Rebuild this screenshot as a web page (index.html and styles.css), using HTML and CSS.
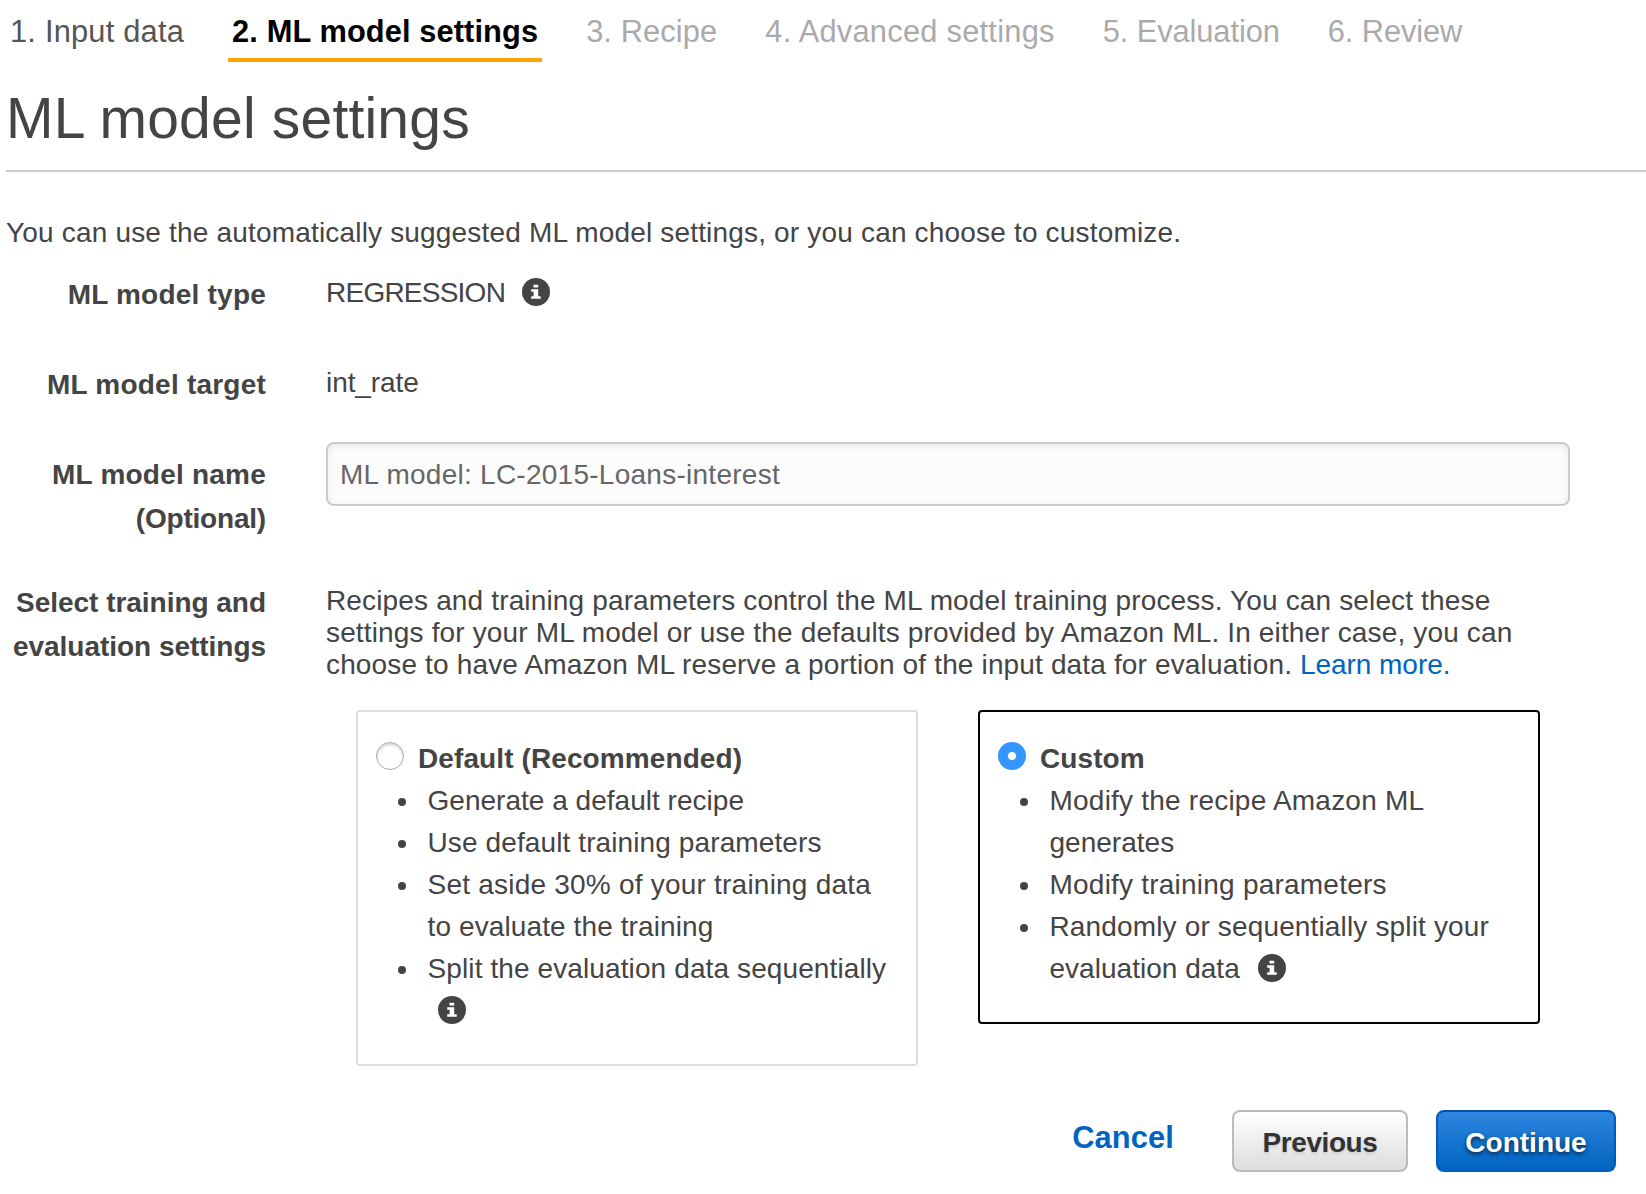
FILE: index.html
```
<!DOCTYPE html>
<html lang="en">
<head>
<meta charset="utf-8">
<title>ML model settings</title>
<link rel="stylesheet" href="styles.css">
</head>
<body>
<svg class="sprite" aria-hidden="true">
  <symbol id="info" viewBox="0 0 28 28">
    <circle cx="14" cy="14" r="14" fill="#444"/>
    <path fill="#fff" d="M11.5 6.7h4.7v2.8h-4.7zM9.2 11.3h7v7h2.5v2.5H9.2v-2.5h2.4v-4.6H9.2z"/>
  </symbol>
</svg>
<nav class="steps">
  <a class="step step-done">1. Input data</a>
  <a class="step step-current">2. ML model settings</a>
  <a class="step step-recipe">3. Recipe</a>
  <a class="step step-advanced">4. Advanced settings</a>
  <a class="step step-evaluation">5. Evaluation</a>
  <a class="step step-review">6. Review</a>
</nav>
<main class="page">
  <h1 class="title">ML model settings</h1>
  <p class="intro">You can use the automatically suggested ML model settings, or you can choose to customize.</p>

  <div class="row row-type">
    <div class="label">ML model type</div>
    <div class="value"><span class="caps">REGRESSION</span><svg class="info info-type"><use href="#info"/></svg></div>
  </div>
  <div class="row row-target">
    <div class="label">ML model target</div>
    <div class="value"><span class="target">int_rate</span></div>
  </div>
  <div class="row row-name">
    <label class="label" for="name">ML model name<br><span class="optional">(Optional)</span></label>
    <input class="input" id="name" type="text" placeholder="ML model: LC-2015-Loans-interest">
  </div>
  <div class="row">
    <div class="label label-tight">Select training and<br>evaluation settings</div>
    <div class="value">
      <p class="description">Recipes and training parameters control the ML model training process. You can select these<br>settings for your ML model or use the defaults provided by Amazon ML. In either case, you can<br>choose to have Amazon ML reserve a portion of the input data for evaluation. <a class="link">Learn more.</a></p>
      <div class="options">
        <section class="option">
          <div class="option-head"><span class="radio"></span><span class="option-title">Default (Recommended)</span></div>
          <ul class="list">
            <li><span class="snug">Generate a default recipe</span></li>
            <li><span class="regular">Use default training parameters</span></li>
            <li><span><span class="wide">Set aside 30% of your training data</span><br><span class="regular">to evaluate the training</span></span></li>
            <li><span class="regular">Split the evaluation data sequentially<br><svg class="info info-wrapped"><use href="#info"/></svg></span></li>
          </ul>
        </section>
        <section class="option option-selected">
          <div class="option-head"><span class="radio radio-on"></span><span class="option-title">Custom</span></div>
          <ul class="list">
            <li><span><span class="wide">Modify the recipe Amazon ML</span><br><span class="snug">generates</span></span></li>
            <li><span class="wide">Modify training parameters</span></li>
            <li><span>Randomly or sequentially split your<br><span class="snug">evaluation data</span><svg class="info info-split"><use href="#info"/></svg></span></li>
          </ul>
        </section>
      </div>
    </div>
  </div>

  <footer class="actions">
    <a class="cancel">Cancel</a>
    <button class="button previous">Previous</button>
    <button class="button continue">Continue</button>
  </footer>
</main>
</body>
</html>
```
FILE: styles.css
```
* { box-sizing: border-box; }
body {
  margin: 0;
  background: #fff;
  color: #444;
  font: 28px/32px "Liberation Sans", Arial, sans-serif;
  letter-spacing: 0.15px;
  overflow-x: hidden;
}
h1, p, ul { margin: 0; padding: 0; }
.sprite { display: none; }

.steps {
  display: flex;
  gap: 40px;
  padding: 14px 0 0 6px;
  font-size: 30.8px;
  line-height: 36px;
  white-space: nowrap;
}
.step {
  padding: 0 4px 8px;
  border-bottom: 4px solid transparent;
  color: #aaa;
}
.step-done { color: #555; letter-spacing: 0.22px; }
.step-current {
  color: #000;
  font-weight: bold;
  border-color: #ffa500;
  letter-spacing: 0.1px;
}
.step-recipe { letter-spacing: 0.12px; }
.step-advanced { letter-spacing: 0.26px; }
.step-evaluation, .step-review { letter-spacing: -0.08px; }

.page { padding-left: 6px; }
.title {
  margin-top: 26px;
  padding-bottom: 22px;
  border-bottom: 2px solid #ccc;
  font-size: 57px;
  line-height: 60px;
  font-weight: normal;
  letter-spacing: 0.2px;
}
.intro { margin: 45px 0 23px; letter-spacing: 0.18px; }

.row {
  display: grid;
  grid-template-columns: 260px 1244px;
  column-gap: 60px;
  align-items: start;
}
.row-type { height: 90px; }
.row-target { height: 80px; }
.row-name { height: 138px; }
.label {
  padding-top: 1px;
  text-align: right;
  font-weight: bold;
  line-height: 44px;
  letter-spacing: 0.22px;
  white-space: nowrap;
}
.row-name .label { padding-top: 11px; }
.label-tight { letter-spacing: -0.03px; }
.optional { letter-spacing: -0.2px; }
.value { padding-top: 5px; }
.caps { letter-spacing: -0.76px; }
.target { letter-spacing: -0.08px; }

.input {
  width: 100%;
  height: 64px;
  padding: 1px 12px 0;
  border: 2px solid #ccc;
  border-radius: 8px;
  background: #fcfcfc;
  box-shadow: inset 0 2px 8px rgba(0, 0, 0, 0.08);
  font: inherit;
  letter-spacing: 0.26px;
}
.input::placeholder { color: #666; opacity: 1; }

.description { white-space: nowrap; }
.link, .cancel { color: #0064c1; }
.link { letter-spacing: -0.05px; }

.info { width: 28px; height: 28px; vertical-align: -4px; }
.info-type { margin-left: 17px; }
.info-wrapped { margin-left: 10px; }
.info-split { margin-left: 18px; }

.options {
  display: flex;
  gap: 60px;
  align-items: flex-start;
  margin: 29px 30px 0;
}
.option {
  width: 562px;
  padding: 30px 18px 32px;
  border: 2px solid #ddd;
  border-radius: 4px;
}
.option-selected { border-color: #000; }
.option-head { display: flex; gap: 14px; margin-bottom: 5px; }
.option-title { padding-top: 1px; font-weight: bold; letter-spacing: 0.1px; }
.radio {
  width: 28px;
  height: 28px;
  border: 1px solid #aaa;
  border-radius: 50%;
  background: #fff;
  box-shadow: inset 0 2px 3px rgba(0, 0, 0, 0.18);
}
.radio-on {
  border: 0;
  background: radial-gradient(circle, #fff 3.6px, #3395ff 4.6px);
  box-shadow: none;
}
.list { list-style: none; line-height: 42px; white-space: nowrap; }
.list li { display: flex; gap: 21.5px; padding-left: 22px; }
.list li::before {
  content: "";
  width: 8px;
  height: 8px;
  margin-top: 18px;
  border-radius: 50%;
  background: #444;
}
.snug { letter-spacing: 0.02px; }
.regular { letter-spacing: 0.11px; }
.wide { letter-spacing: 0.22px; }

.actions {
  display: flex;
  justify-content: flex-end;
  align-items: flex-start;
  margin-top: 44px;
  padding-right: 30px;
}
.cancel {
  padding-top: 12px;
  margin-right: 58px;
  font-size: 30.8px;
  font-weight: bold;
  letter-spacing: 0.14px;
}
.button {
  height: 62px;
  padding: 3px 0 0;
  border: 2px solid;
  border-radius: 8px;
  font: bold 28px/32px "Liberation Sans", Arial, sans-serif;
}
.previous {
  width: 176px;
  margin-right: 28px;
  border-color: #bbb;
  background: linear-gradient(#fff, #ddd);
  color: #333;
  letter-spacing: -0.42px;
  text-shadow: 0 2px 3px rgba(0, 0, 0, 0.12);
}
.continue {
  width: 180px;
  border-color: #0053ac #005eb8 #005eb8;
  background: linear-gradient(#2e86e0, #0064c1);
  color: #fff;
  letter-spacing: 0;
  text-shadow: 0 2px 4px rgba(0, 0, 0, 0.7);
}
```
